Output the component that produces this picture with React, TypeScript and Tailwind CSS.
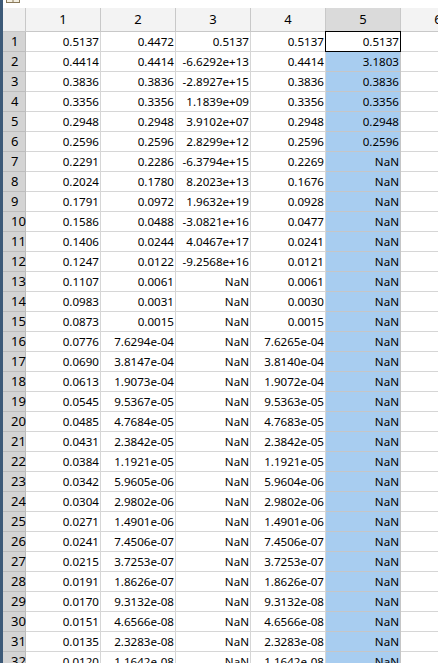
import React from "react";

const data: string[][] = [
  ["0.5137", "0.4472", "0.5137", "0.5137", "0.5137"],
  ["0.4414", "0.4414", "-6.6292e+13", "0.4414", "3.1803"],
  ["0.3836", "0.3836", "-2.8927e+15", "0.3836", "0.3836"],
  ["0.3356", "0.3356", "1.1839e+09", "0.3356", "0.3356"],
  ["0.2948", "0.2948", "3.9102e+07", "0.2948", "0.2948"],
  ["0.2596", "0.2596", "2.8299e+12", "0.2596", "0.2596"],
  ["0.2291", "0.2286", "-6.3794e+15", "0.2269", "NaN"],
  ["0.2024", "0.1780", "8.2023e+13", "0.1676", "NaN"],
  ["0.1791", "0.0972", "1.9632e+19", "0.0928", "NaN"],
  ["0.1586", "0.0488", "-3.0821e+16", "0.0477", "NaN"],
  ["0.1406", "0.0244", "4.0467e+17", "0.0241", "NaN"],
  ["0.1247", "0.0122", "-9.2568e+16", "0.0121", "NaN"],
  ["0.1107", "0.0061", "NaN", "0.0061", "NaN"],
  ["0.0983", "0.0031", "NaN", "0.0030", "NaN"],
  ["0.0873", "0.0015", "NaN", "0.0015", "NaN"],
  ["0.0776", "7.6294e-04", "NaN", "7.6265e-04", "NaN"],
  ["0.0690", "3.8147e-04", "NaN", "3.8140e-04", "NaN"],
  ["0.0613", "1.9073e-04", "NaN", "1.9072e-04", "NaN"],
  ["0.0545", "9.5367e-05", "NaN", "9.5363e-05", "NaN"],
  ["0.0485", "4.7684e-05", "NaN", "4.7683e-05", "NaN"],
  ["0.0431", "2.3842e-05", "NaN", "2.3842e-05", "NaN"],
  ["0.0384", "1.1921e-05", "NaN", "1.1921e-05", "NaN"],
  ["0.0342", "5.9605e-06", "NaN", "5.9604e-06", "NaN"],
  ["0.0304", "2.9802e-06", "NaN", "2.9802e-06", "NaN"],
  ["0.0271", "1.4901e-06", "NaN", "1.4901e-06", "NaN"],
  ["0.0241", "7.4506e-07", "NaN", "7.4506e-07", "NaN"],
  ["0.0215", "3.7253e-07", "NaN", "3.7253e-07", "NaN"],
  ["0.0191", "1.8626e-07", "NaN", "1.8626e-07", "NaN"],
  ["0.0170", "9.3132e-08", "NaN", "9.3132e-08", "NaN"],
  ["0.0151", "4.6566e-08", "NaN", "4.6566e-08", "NaN"],
  ["0.0135", "2.3283e-08", "NaN", "2.3283e-08", "NaN"],
  ["0.0120", "1.1642e-08", "NaN", "1.1642e-08", "NaN"],
];

export default function App() {
  return (
    <div
      className="w-[438px] h-[663px] overflow-hidden bg-white flex text-[11.6px] text-black"
      style={{ fontFamily: '"Noto Sans", "Open Sans", sans-serif' }}
    >
      <div className="w-[3px] shrink-0 bg-[#3d5a78]" />
      <div className="flex flex-col flex-1 min-w-0">
        <div className="h-[8px] shrink-0 relative overflow-hidden">
          <svg width="16" height="8" viewBox="0 0 16 8" className="absolute left-[3px] top-0">
            <rect x="0.5" y="-4.5" width="13" height="7" fill="#f4efe2" stroke="#8a7a5a" />
            <line x1="7" y1="-4" x2="7" y2="3" stroke="#8a7a5a" />
          </svg>
        </div>
        <div className="grid grid-cols-[23px_repeat(6,75px)] auto-rows-[20px] grid-rows-[24px]">
          <div className="bg-[#f0f0f0] border-r border-b border-[#c8c8c8]" />
          {[1, 2, 3, 4, 5, 6].map((c) => (
            <div
              key={c}
              className={
                "flex items-center justify-center border-r border-b border-[#c8c8c8] leading-none text-[13px] " +
                (c === 5 ? "bg-[#dadada]" : "bg-[#f3f3f3]")
              }
            >
              {c}
            </div>
          ))}
          {data.map((row, r) => (
            <React.Fragment key={r}>
              <div className="flex items-center pl-[8px] bg-[#d4d4d4] border-r border-b border-[#bdbdbd] text-[13px] leading-none">
                {r + 1}
              </div>
              {row.map((v, c) => {
                const selected = c === 4 && r > 0;
                const active = c === 4 && r === 0;
                return (
                  <div
                    key={c}
                    className={
                      "relative flex items-center justify-end pr-[1px] border-r border-b leading-none " +
                      (selected ? "bg-[#a8cdf0] border-[#c6c6c6]" : "bg-white border-[#d6d6d6]")
                    }
                  >
                    {v}
                    {active && <div className="absolute -inset-px border border-black" />}
                  </div>
                );
              })}
              <div className="bg-white border-r border-b border-[#d6d6d6]" />
            </React.Fragment>
          ))}
        </div>
      </div>
    </div>
  );
}
